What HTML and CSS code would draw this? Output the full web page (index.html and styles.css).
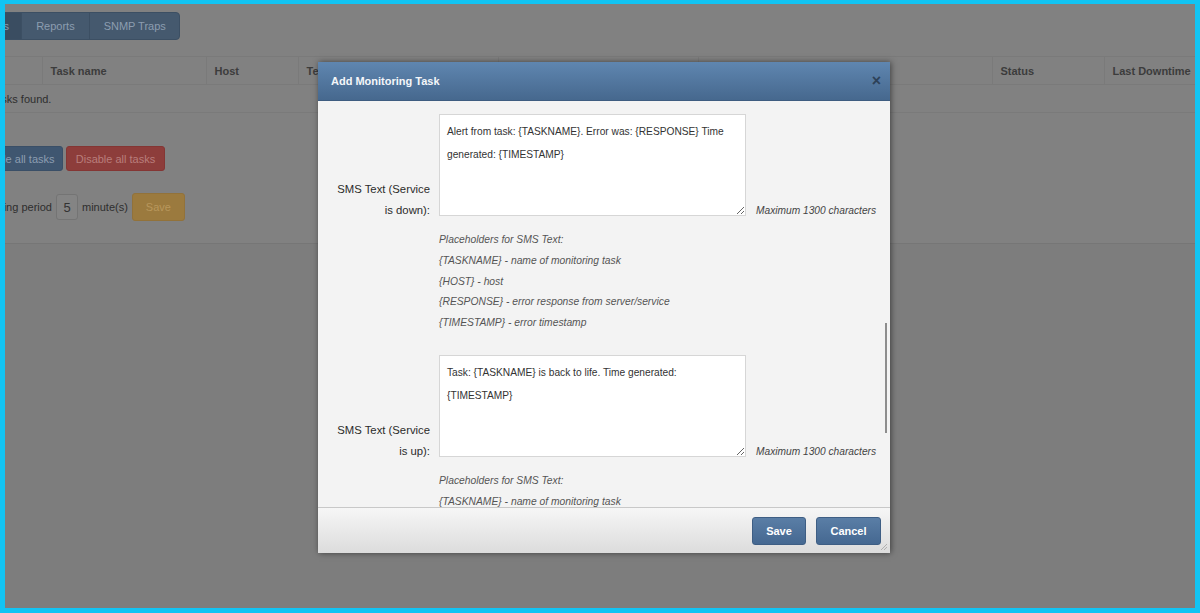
FILE: index.html
```html
<!DOCTYPE html>
<html>
<head>
<meta charset="utf-8">
<title>Add Monitoring Task</title>
<link rel="stylesheet" href="styles.css">
</head>
<body>
<div class="screen">
  <div class="page">
    <div class="top">
      <nav class="tabs">
        <a class="tab active">Tasks</a>
        <a class="tab">Reports</a>
        <a class="tab">SNMP Traps</a>
      </nav>
      <table class="tasks">
        <colgroup>
          <col class="c-id"><col class="c-name"><col class="c-host"><col class="c-type"><col class="c-a"><col class="c-b"><col class="c-status"><col class="c-down">
        </colgroup>
        <thead>
          <tr><th></th><th>Task name</th><th>Host</th><th>Test type</th><th>Interval</th><th>Last check</th><th>Status</th><th>Last Downtime</th></tr>
        </thead>
        <tbody>
          <tr><td colspan="8" class="empty"><span>No tasks found.</span></td></tr>
        </tbody>
      </table>
      <div class="actions">
        <button class="btn btn-blue">Enable all tasks</button>
        <button class="btn btn-red">Disable all tasks</button>
      </div>
      <div class="period">
        <span class="period-label">Monitoring period</span>
        <span class="num-input">5</span>
        <span>minute(s)</span>
        <button class="btn btn-orange">Save</button>
      </div>
    </div>
    <div class="bottom"></div>
  </div>

  <div class="modal">
    <div class="modal-header">
      <span class="modal-title">Add Monitoring Task</span>
      <span class="modal-close">×</span>
    </div>
    <div class="modal-body">
      <div class="form">
        <div class="field">
          <label class="field-label">SMS Text (Service is down):</label>
          <textarea class="field-text">Alert from task: {TASKNAME}. Error was: {RESPONSE} Time generated: {TIMESTAMP}</textarea>
          <span class="field-help">Maximum 1300 characters</span>
        </div>
        <ul class="hints">
          <li>Placeholders for SMS Text:</li>
          <li>{TASKNAME} - name of monitoring task</li>
          <li>{HOST} - host</li>
          <li>{RESPONSE} - error response from server/service</li>
          <li>{TIMESTAMP} - error timestamp</li>
        </ul>
        <div class="field">
          <label class="field-label">SMS Text (Service is up):</label>
          <textarea class="field-text">Task: {TASKNAME} is back to life. Time generated: {TIMESTAMP}</textarea>
          <span class="field-help">Maximum 1300 characters</span>
        </div>
        <ul class="hints">
          <li>Placeholders for SMS Text:</li>
          <li>{TASKNAME} - name of monitoring task</li>
          <li>{HOST} - host</li>
        </ul>
      </div>
      <span class="scroll-thumb"></span>
    </div>
    <div class="modal-footer">
      <button class="mbtn mbtn-save">Save</button>
      <button class="mbtn mbtn-cancel">Cancel</button>
      <svg class="grip" width="8" height="8" viewBox="0 0 8 8"><path d="M7 1L1 7M7 4L4 7" stroke="#b0b0b0" stroke-width="1"/></svg>
    </div>
  </div>
</div>
</body>
</html>
```

FILE: styles.css
```css
* { box-sizing: border-box; }
html, body { margin: 0; padding: 0; }
body {
  width: 1200px;
  height: 613px;
  overflow: hidden;
  font-family: "Liberation Sans", Arial, sans-serif;
  background: #12c4f3;
}
.screen {
  position: relative;
  width: 1200px;
  height: 613px;
  border: solid #12c4f3;
  border-width: 4px 5px 5px 5px;
  overflow: hidden;
}
.page {
  height: 100%;
  display: flex;
  flex-direction: column;
  color: #2f2f2f;
  font-size: 11px;
}
.top {
  background: #818181;
  height: 240px;
  padding-top: 8px;
  border-bottom: 1px solid #767676;
  overflow: hidden;
}
.bottom {
  flex: 1;
  background: #7d7d7d;
}

/* tabs */
.tabs {
  display: inline-flex;
  margin-left: -39px;
  height: 28px;
  background: #45596e;
  border-radius: 4px;
  border: 1px solid #3c4f63;
}
.tab {
  display: flex;
  align-items: center;
  padding: 0 14px;
  color: #8c9db0;
  font-size: 11px;
  border-right: 1px solid #3c4f63;
}
.tab.active { padding: 0 12px 0 14px; background: #3a4d61; }
.tab:last-child { border-right: 0; padding-right: 13px; }

/* table */
.tasks {
  margin-top: 16px;
  width: 1190px;
  border-collapse: collapse;
  table-layout: fixed;
}
.c-id { width: 37px; }
.c-name { width: 164px; }
.c-host { width: 92px; }
.c-type { width: 200px; }
.c-a { width: 200px; }
.c-b { width: 294px; }
.c-status { width: 112px; }
.c-down { width: 91px; }
.tasks th {
  height: 28px;
  text-align: left;
  padding: 0 8px;
  font-weight: bold;
  color: #3c3c3c;
  border: 1px solid #7a7a7a;
  white-space: nowrap;
  overflow: hidden;
}
.tasks th:first-child { border-left: 0; }
.tasks td {
  height: 28px;
  padding: 0;
  border-bottom: 1px solid #7a7a7a;
  color: #2e2e2e;
  font-size: 11px;
}
.tasks td.empty span { display: inline-block; margin-left: -30px; }

/* buttons */
.actions {
  margin-top: 33px;
  margin-left: -36px;
  display: flex;
  gap: 3px;
}
.btn {
  font-family: inherit;
  font-size: 11px;
  height: 25px;
  padding: 0;
  border-radius: 3px;
  border: 1px solid transparent;
  white-space: nowrap;
}
.btn-blue { background: #3f5670; color: #8c9db1; border-color: #3a4f67; width: 94px; }
.btn-red { background: #8d3d3b; color: #b97e7b; border-color: #843634; width: 99px; }
.btn-orange { background: #9b7a3e; color: #b8975c; border-color: #92723a; height: 28px; width: 53px; }

.period {
  margin-top: 22px;
  margin-left: -38px;
  display: flex;
  align-items: center;
  gap: 4px;
  font-size: 11px;
  color: #2e2e2e;
}
.num-input {
  display: inline-flex;
  align-items: center;
  justify-content: center;
  width: 22px;
  height: 26px;
  border: 1px solid #747474;
  border-radius: 3px;
  background: #848484;
  font-size: 13px;
  color: #333;
}

/* modal */
.modal {
  position: absolute;
  left: 313px;
  top: 58px;
  width: 572px;
  height: 491px;
  display: flex;
  flex-direction: column;
  box-shadow: 1px 0 6px rgba(0,0,0,0.5);
}
.modal-header {
  height: 39px;
  flex: none;
  display: flex;
  align-items: center;
  justify-content: space-between;
  padding: 0 9px 0 13px;
  background: linear-gradient(#5f86b0, #46688e);
  border-bottom: 1px solid #3e5c80;
}
.modal-title {
  color: #f4f6f9;
  font-weight: bold;
  font-size: 11px;
}
.modal-close {
  color: #2d4158;
  font-size: 16px;
  font-weight: bold;
  line-height: 1;
  margin-top: -1px;
}
.modal-body {
  position: relative;
  flex: none;
  height: 406px;
  background: #f3f3f3;
  overflow: hidden;
}
.form { padding-top: 13px; }
.field {
  display: flex;
  align-items: flex-end;
}
.field-label {
  width: 112px;
  margin-right: 9px;
  text-align: right;
  padding-left: 12px;
  font-size: 11.3px;
  line-height: 21px;
  color: #2b2b2b;
}
.field-text {
  display: block;
  width: 307px;
  height: 102px;
  margin: 0 0 5px 0;
  padding: 5px 7px;
  border: 1px solid #d6d6d6;
  background: #fff;
  font-family: "Liberation Sans", Arial, sans-serif;
  font-size: 10.2px;
  line-height: 23px;
  color: #333;
  resize: vertical;
  overflow: hidden;
}
.field-help {
  margin-left: 10px;
  font-size: 10.2px;
  font-style: italic;
  line-height: 21px;
  color: #444;
}
.hints {
  list-style: none;
  margin: 9px 0 21px 121px;
  padding: 0;
  font-size: 10.3px;
  font-style: italic;
  line-height: 20.75px;
  color: #555;
}
.scroll-thumb {
  position: absolute;
  right: 3px;
  top: 222px;
  width: 2px;
  height: 110px;
  background: #8d8d8d;
}
.modal-footer {
  position: relative;
  flex: 1;
  display: flex;
  justify-content: flex-end;
  align-items: flex-start;
  gap: 10px;
  padding: 9px 9px 0 0;
  background: linear-gradient(#f6f6f6, #dcdcdc);
  border-top: 1px solid #c8c8c8;
}
.mbtn {
  height: 28px;
  padding: 0;
  font-family: inherit;
  font-size: 11px;
  font-weight: bold;
  color: #fff;
  background: linear-gradient(#5a7ea6, #456891);
  border: 1px solid #3e5e84;
  border-radius: 3px;
}
.mbtn-save { width: 54px; }
.mbtn-cancel { width: 65px; }
.grip {
  position: absolute;
  right: 2px;
  bottom: 2px;
}
```
